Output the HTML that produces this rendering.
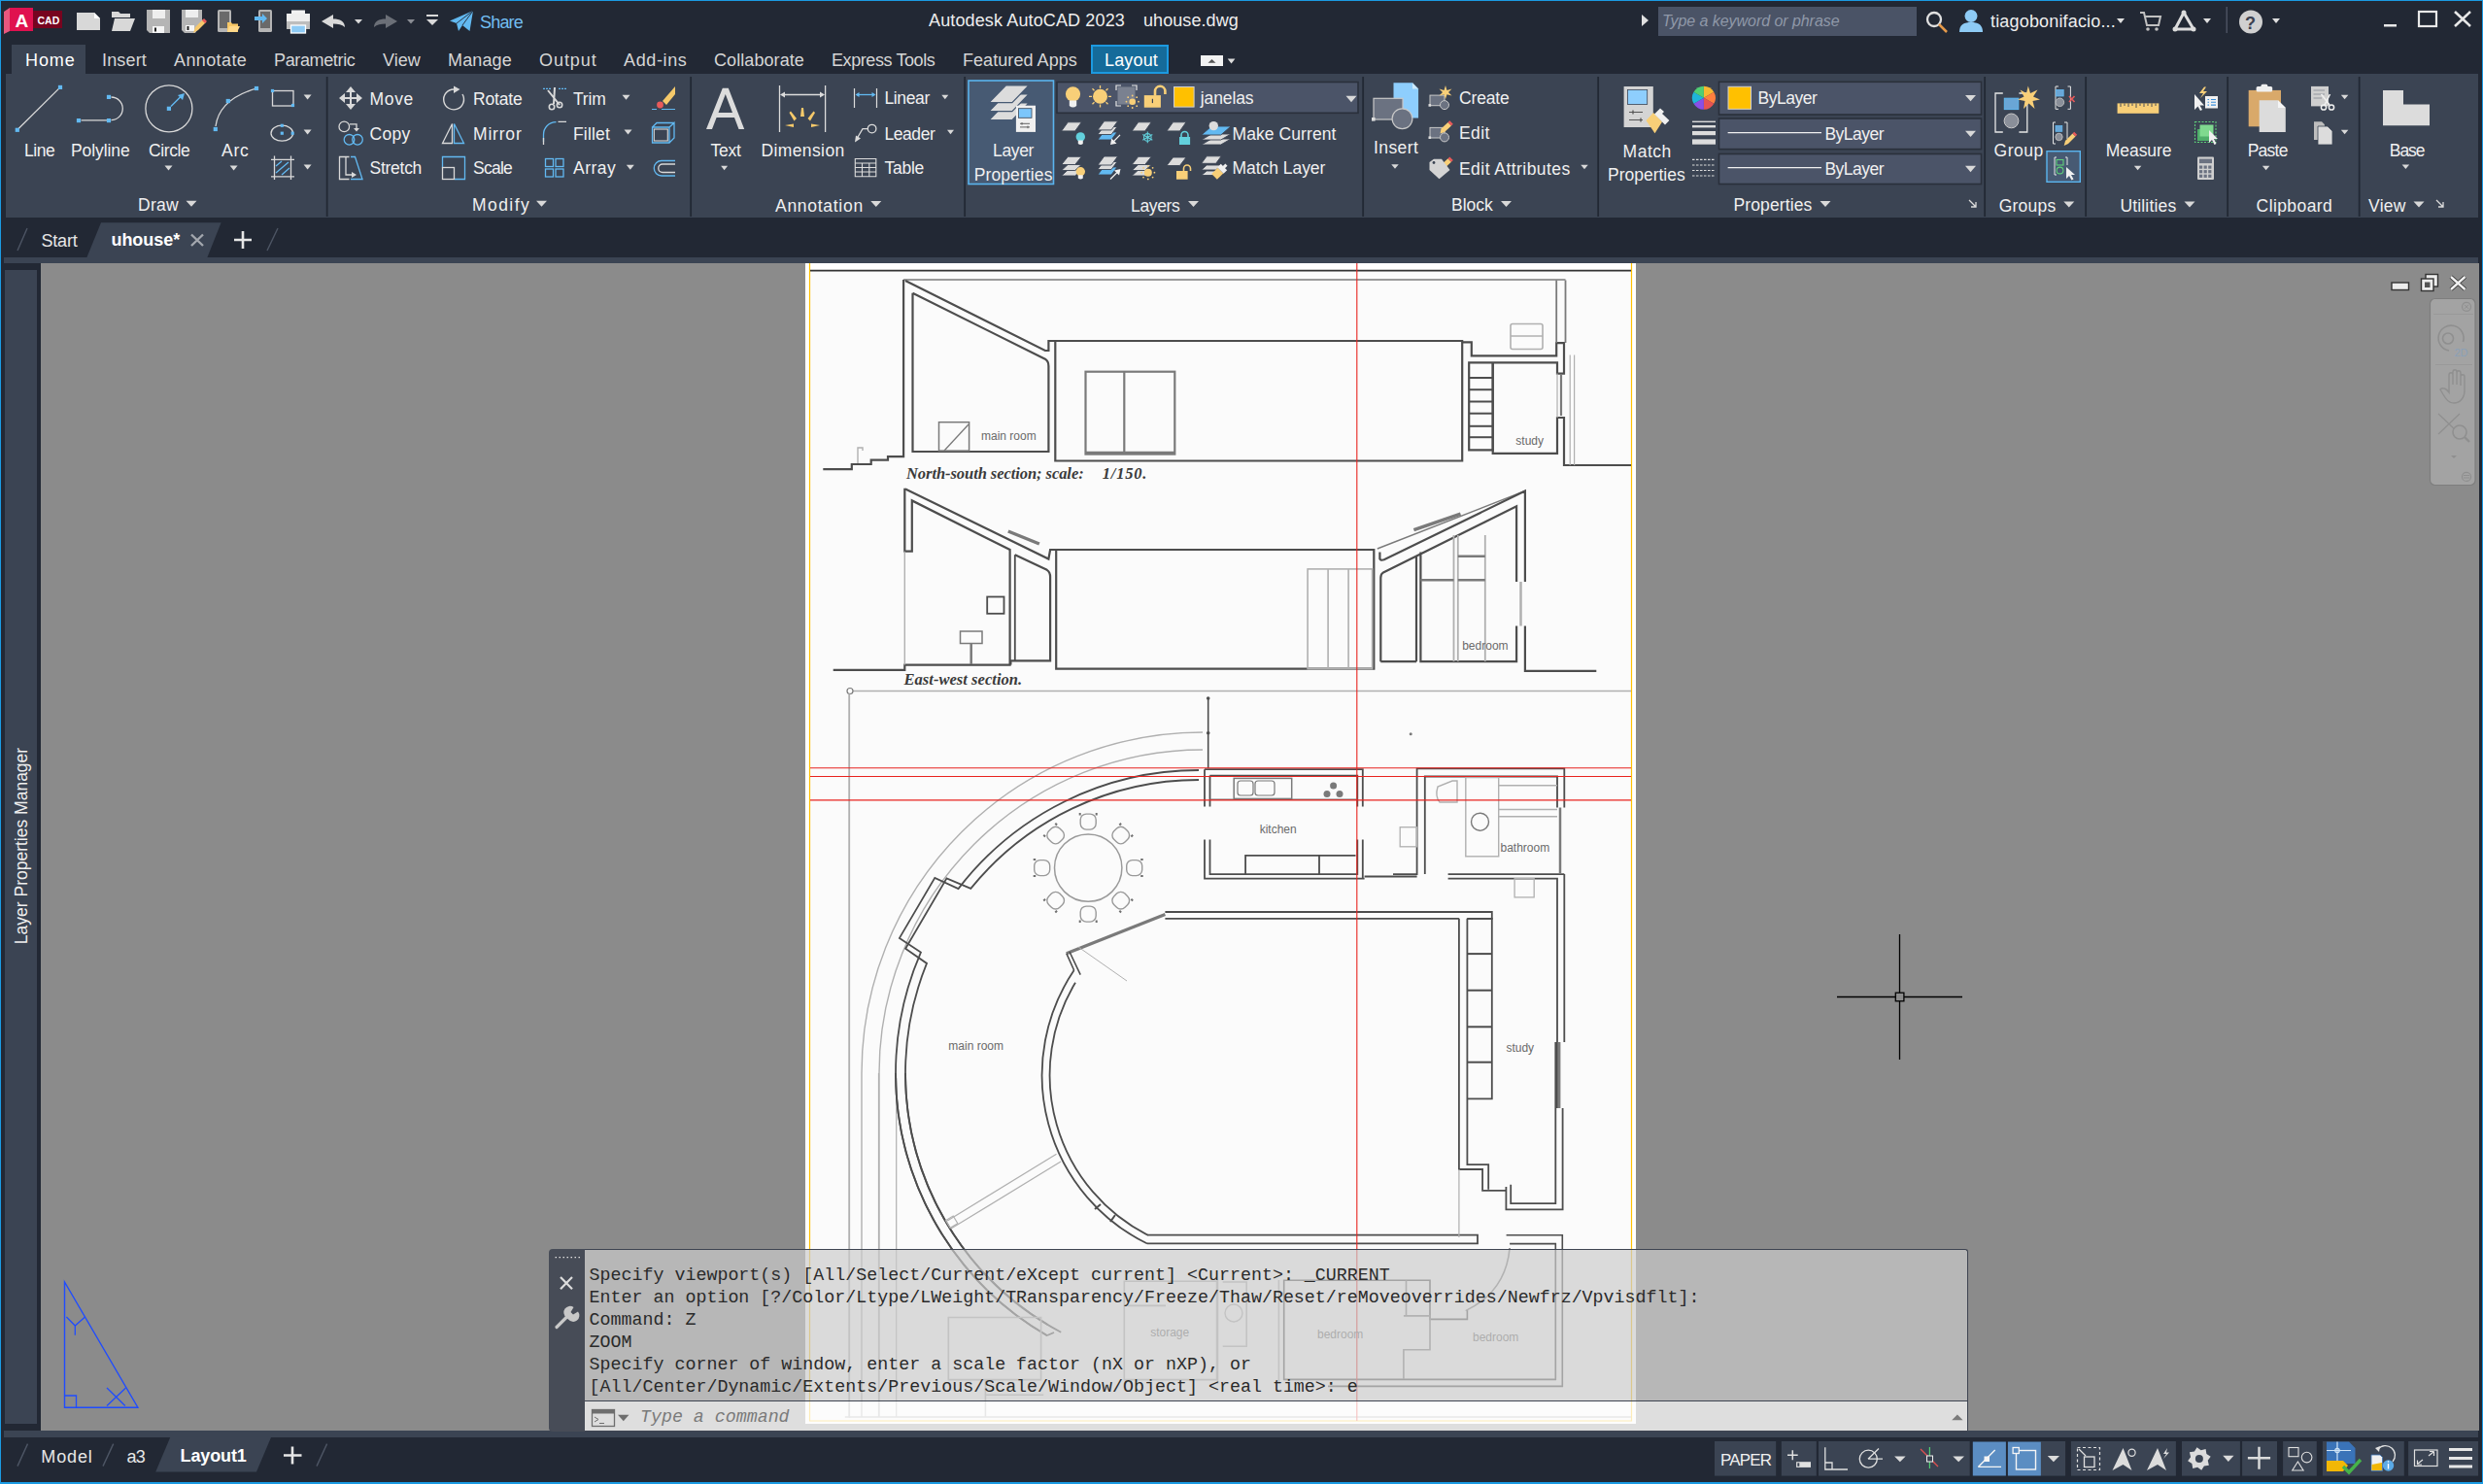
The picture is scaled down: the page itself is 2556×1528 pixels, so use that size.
<!DOCTYPE html>
<html><head><meta charset="utf-8"><title>AutoCAD</title>
<style>
html,body{margin:0;padding:0;width:2556px;height:1528px;overflow:hidden;background:#222834;}
body{position:relative;font-family:"Liberation Sans",sans-serif;}
body>div,body>svg{position:absolute;}
.t{white-space:nowrap;}
</style></head><body>
<div style="left:0px;top:0px;width:2556px;height:1528px;background:#222834;"></div>
<div style="left:6px;top:76px;width:2545px;height:148px;background:#3b4453;"></div>
<div style="left:12px;top:46px;width:76px;height:30px;background:#3b4453;"></div>
<div style="left:4px;top:265px;width:2547px;height:6px;background:#3b4453;"></div>
<div style="left:42px;top:271px;width:2510px;height:1202px;background:#8b8b8b;"></div>
<div style="left:5px;top:278px;width:33px;height:1188px;background:#3b4453;"></div>
<div style="left:4px;top:1473px;width:2547px;height:7px;background:#3b4453;"></div>
<div style="left:0px;top:0px;width:2556px;height:1px;background:#1b9be3;"></div>
<div style="left:0px;top:0px;width:1px;height:1528px;background:#1b9be3;"></div>
<div style="left:2555px;top:0px;width:1px;height:1528px;background:#1b9be3;"></div>
<div style="left:0px;top:1526px;width:2556px;height:2px;background:#1b9be3;"></div>
<svg style="left:0;top:0" width="2556" height="45" viewBox="0 0 2556 45"><polygon points="4,12 10,8 10,32 4,35" fill="#e8577e"/><rect x="10" y="8" width="24" height="24" fill="#e0114f"/><rect x="34" y="11" width="30" height="18" fill="#77041f"/><text x="15.5" y="27.5" font-family="Liberation Sans" font-weight="bold" font-size="19" fill="#ffffff">A</text><text x="38.5" y="25" font-family="Liberation Sans" font-weight="bold" font-size="10.5" fill="#ffffff">CAD</text><path d="M79,13 H97 L103,19 V31 H79 Z" fill="#d8d8d8"/><path d="M97,13 L103,19 H97 Z" fill="#ffffff"/><path d="M115,12 H122 L124,14 H134 V18 H115 Z" fill="#d8d8d8"/><path d="M118,19 H139 L134,32 H115 Z" fill="#d8d8d8"/><path d="M115,18 V32" stroke="#222834" stroke-width="0"/><path d="M151,10 H175 V34 H154 L151,31 Z" fill="#b5b5b5"/><rect x="157" y="10" width="13" height="9" fill="#eeeeee"/><rect x="157" y="27" width="12" height="7" fill="#f5f5f5"/><rect x="159" y="28.5" width="2" height="4" fill="#222"/><path d="M187,10 H208 V24 L201,34 H190 L187,31 Z" fill="#b5b5b5"/><rect x="191" y="10" width="13" height="8" fill="#eeeeee"/><rect x="191" y="26" width="9" height="6" fill="#f5f5f5"/><rect x="192.5" y="27" width="2" height="4" fill="#222"/><path d="M199,34 L201,28 L209,20 L212,23 L204,31 Z" fill="#f5c76b"/><path d="M208,21 L210,19 L213,22 L211,24 Z" fill="#e85a5a"/><rect x="224" y="10" width="14" height="23" rx="1.5" fill="#b5b5b5"/><rect x="226" y="12" width="10" height="17" fill="#6a6a6a"/><path d="M234,23 H238 L239,24.5 H245 V33 H234 Z" fill="#f7c766"/><path d="M236,27 H247 L244,33 H234 Z" fill="#ffd98a"/><rect x="266" y="10" width="14" height="23" rx="1.5" fill="#b5b5b5"/><rect x="268" y="12" width="10" height="17" fill="#6a6a6a"/><path d="M262,17 H270 V14 L275,19 L270,24 V21 H262 Z" fill="#62b9f1"/><rect x="299.5" y="10" width="15" height="8" fill="#f2f2f2" stroke="#222834" stroke-width="1"/><rect x="295" y="14" width="24" height="9" fill="#eeeeee"/><rect x="295" y="22" width="24" height="8" fill="#bdbdbd"/><rect x="299.5" y="26" width="15" height="8" fill="#8ecbf5" stroke="#ffffff" stroke-width="1.3"/><path d="M331,22 L343,15 V19.5 C350,19.5 355,22 355,28 C352,25 348,24.5 343,24.5 V29 Z" fill="#d9d9d9"/><path d="M365,20 H373 L369,24.5 Z" fill="#d9d9d9"/><path d="M409,22 L397,15 V19.5 C390,19.5 385,22 385,28 C388,25 392,24.5 397,24.5 V29 Z" fill="#6b6f77"/><path d="M419,20 H427 L423,24.5 Z" fill="#8a8d94"/><rect x="439" y="15" width="12" height="2" fill="#d9d9d9"/><path d="M439,20 H451 L445,26 Z" fill="#d9d9d9"/><path d="M487,11 L463,21.5 L470,24 L472,32 L476,26 L483.5,32 Z" fill="#62b9f1"/><path d="M487,11 L470,24 M487,11 L476,26" stroke="#222834" stroke-width="0.9" fill="none"/><path d="M1690,15 L1697,21 L1690,27 Z" fill="#e0e0e0"/><circle cx="1991" cy="20" r="7" fill="none" stroke="#e0e0e0" stroke-width="2.3"/><path d="M1996,25 L2004,33" stroke="#e69a4a" stroke-width="2.5"/><circle cx="2029" cy="16.5" r="6.5" fill="#8ecbf5"/><path d="M2017,33 C2017,25 2022,23 2029,23 C2036,23 2041,25 2041,33 Z" fill="#8ecbf5"/><path d="M2179,19 H2187 L2183,24 Z" fill="#e0e0e0"/><path d="M2203,13 H2207 L2210,26 H2222 L2224,17 H2208" fill="none" stroke="#c0c0c0" stroke-width="2"/><circle cx="2211" cy="30" r="1.8" fill="#c0c0c0"/><circle cx="2220" cy="30" r="1.8" fill="#c0c0c0"/><path d="M2248,13 L2239,30 H2258 Z" fill="none" stroke="#dcdcdc" stroke-width="3" stroke-linejoin="round"/><circle cx="2248" cy="13" r="2.5" fill="#dcdcdc"/><circle cx="2239" cy="30" r="2.5" fill="#dcdcdc"/><circle cx="2258" cy="30" r="2.5" fill="#dcdcdc"/><path d="M2268,19 H2276 L2272,24 Z" fill="#e0e0e0"/><rect x="2291.5" y="7" width="1.5" height="27" fill="#4a5060"/><circle cx="2317" cy="22.5" r="12" fill="#d0d0d0"/><text x="2311" y="29.5" font-family="Liberation Sans" font-size="18" font-weight="bold" fill="#3b4150">?</text><path d="M2339,19 H2347 L2343,24 Z" fill="#e0e0e0"/><rect x="2454" y="25" width="13" height="2.5" fill="#e8e8e8"/><rect x="2490" y="12" width="18" height="15" fill="none" stroke="#e8e8e8" stroke-width="2.2"/><path d="M2527,12 L2543,27 M2543,12 L2527,27" stroke="#e8e8e8" stroke-width="2.6"/></svg>
<svg style="left:0;top:76" width="2556" height="150" viewBox="0 76 2556 150"><rect x="335.75" y="79" width="1.8" height="144" fill="#222834"/><rect x="710.25" y="79" width="1.8" height="144" fill="#222834"/><rect x="992.25" y="79" width="1.8" height="144" fill="#222834"/><rect x="1402.25" y="79" width="1.8" height="144" fill="#222834"/><rect x="1644.25" y="79" width="1.8" height="144" fill="#222834"/><rect x="2042.25" y="79" width="1.8" height="144" fill="#222834"/><rect x="2146.25" y="79" width="1.8" height="144" fill="#222834"/><rect x="2292.25" y="79" width="1.8" height="144" fill="#222834"/><rect x="2427.75" y="79" width="1.8" height="144" fill="#222834"/><path d="M17.8,133.8 L62,89.9" stroke="#d9d9d9" stroke-width="1.3"/><rect x="15.700000000000001" y="131.70000000000002" width="4.2" height="4.2" fill="#62b9f1"/><rect x="59.9" y="87.80000000000001" width="4.2" height="4.2" fill="#62b9f1"/><path d="M83.5,123.8 H110 M114.5,100 A11.8,11.8 0 0 1 114.5,123.6" stroke="#d9d9d9" stroke-width="1.3" fill="none"/><rect x="78.9" y="122.0" width="4.2" height="4.2" fill="#62b9f1"/><rect x="109.9" y="122.0" width="4.2" height="4.2" fill="#62b9f1"/><rect x="109.9" y="97.80000000000001" width="4.2" height="4.2" fill="#62b9f1"/><circle cx="173.9" cy="111.8" r="24" stroke="#d9d9d9" stroke-width="1.3" fill="none"/><path d="M176,109.6 L186,99.6" stroke="#62b9f1" stroke-width="1.4"/><path d="M190,96 L183,98 L188,103 Z" fill="#62b9f1"/><rect x="171.8" y="109.7" width="4.2" height="4.2" fill="#62b9f1"/><path d="M222,130 C224,115 233,100 264,91" stroke="#d9d9d9" stroke-width="1.3" fill="none"/><rect x="219.70000000000002" y="130.9" width="4.2" height="4.2" fill="#62b9f1"/><rect x="232.70000000000002" y="101.9" width="4.2" height="4.2" fill="#62b9f1"/><rect x="261.9" y="88.9" width="4.2" height="4.2" fill="#62b9f1"/><path d="M169.5,170.4 H177.5 L173.5,175.4 Z" fill="#d9d9d9"/><path d="M236.6,170.4 H244.6 L240.6,175.4 Z" fill="#d9d9d9"/><path d="M191.5,206.7 H202.5 L197,212.7 Z" fill="#d9d9d9"/><rect x="280.5" y="93.5" width="21.5" height="15.5" stroke="#d9d9d9" stroke-width="1.3" fill="none"/><rect x="278.9" y="91.9" width="3.2" height="3.2" fill="#62b9f1"/><rect x="299.9" y="106.9" width="3.2" height="3.2" fill="#62b9f1"/><ellipse cx="290.3" cy="137.2" rx="11.3" ry="8" stroke="#d9d9d9" stroke-width="1.3" fill="none"/><rect x="288.7" y="127.70000000000002" width="3.2" height="3.2" fill="#62b9f1"/><rect x="288.7" y="135.6" width="3.2" height="3.2" fill="#62b9f1"/><rect x="299.59999999999997" y="135.6" width="3.2" height="3.2" fill="#62b9f1"/><path d="M279,164.3 H303 M279,181.8 H303 M282.5,160.5 V185 M299.5,160.5 V185" stroke="#d9d9d9" stroke-width="1.3"/><path d="M284,171 L290,166 M284,178 L297,167 M290,180 L298,173" stroke="#62b9f1" stroke-width="1.3"/><path d="M312.6,97.4 H320.6 L316.6,102.4 Z" fill="#d9d9d9"/><path d="M312.6,133.6 H320.6 L316.6,138.6 Z" fill="#d9d9d9"/><path d="M312.6,169.6 H320.6 L316.6,174.6 Z" fill="#d9d9d9"/><path d="M361,91 V111 M351,101 H371" stroke="#d9d9d9" stroke-width="2"/><path d="M361,89 L356,95 H366 Z M361,113 L356,107 H366 Z M349,101 L355,96 V106 Z M373,101 L367,96 V106 Z" fill="#d9d9d9"/><path d="M467,92 A10.4,10.4 0 1 0 476,97" stroke="#d9d9d9" stroke-width="1.4" fill="none"/><path d="M467,88.5 L473.5,92 L467,96 Z" fill="#d9d9d9"/><path d="M559,91.3 H567 M575,91.3 H583" stroke="#62b9f1" stroke-width="1.2" stroke-dasharray="2,1"/><path d="M564,93 L576,108 M571,90 L570,107" stroke="#d9d9d9" stroke-width="2"/><circle cx="568" cy="110" r="2.7" stroke="#d9d9d9" stroke-width="1.6" fill="none"/><circle cx="576" cy="108" r="2.7" stroke="#d9d9d9" stroke-width="1.6" fill="none"/><path d="M682,104 L695,89 V97 L686,108 Z" fill="#f5c96a"/><circle cx="679.5" cy="108" r="3.4" fill="#e85a5a"/><path d="M671,112.5 H676 M681,112.5 H695" stroke="#62b9f1" stroke-width="1.2"/><circle cx="354.3" cy="130.4" r="5.3" stroke="#d9d9d9" stroke-width="1.3" fill="none"/><path d="M360,127.8 H367 V133" stroke="#d9d9d9" stroke-width="1.3" fill="none"/><path d="M364,132 H370 L367,135.5 Z" fill="#d9d9d9"/><circle cx="359.5" cy="143.8" r="5.3" stroke="#62b9f1" stroke-width="1.3" fill="none"/><circle cx="368" cy="143.8" r="5.3" stroke="#62b9f1" stroke-width="1.3" fill="none"/><path d="M465.5,127.5 V147.5 H455.5 Z" stroke="#d9d9d9" stroke-width="1.3" fill="none" stroke-linejoin="miter"/><path d="M467.5,127.5 V147.5 H477.5 Z" stroke="#62b9f1" stroke-width="1.3" fill="none"/><path d="M559.5,146 V139 A13,13 0 0 1 572.5,125.6" stroke="#62b9f1" stroke-width="1.3" fill="none"/><path d="M574.5,125.3 H583 M559.5,142 V149" stroke="#d9d9d9" stroke-width="1.3"/><path d="M671.5,131 H689 V147 H671.5 Z M689,147 L694,142 V126.5 L689,131 M671.5,131 L676,126.5 H694" stroke="#62b9f1" stroke-width="1.3" fill="none"/><rect x="673.3" y="133" width="14" height="12" stroke="#d9d9d9" stroke-width="1.1" fill="none"/><path d="M359.5,161.5 H349.5 V184.5 H359.5" stroke="#d9d9d9" stroke-width="1.3" fill="none"/><path d="M356,161.5 V180 H363" stroke="#d9d9d9" stroke-width="1.3" fill="none"/><path d="M362,177 L367,180 L362,183 Z" fill="#d9d9d9"/><path d="M361,161.5 H365.5 L373,184.5 H361" stroke="#62b9f1" stroke-width="1.3" fill="none"/><path d="M455.5,172.5 V161.5 H478.5 V184.5 H468" stroke="#62b9f1" stroke-width="1.3" fill="none"/><rect x="455.5" y="172.5" width="12" height="12" stroke="#d9d9d9" stroke-width="1.3" fill="none"/><rect x="561.5" y="163.5" width="8" height="8" stroke="#62b9f1" stroke-width="1.3" fill="none"/><rect x="572" y="163.5" width="8" height="8" stroke="#62b9f1" stroke-width="1.3" fill="none"/><rect x="561.5" y="174" width="8" height="8" stroke="#62b9f1" stroke-width="1.3" fill="none"/><rect x="572" y="174" width="8" height="8" stroke="#62b9f1" stroke-width="1.3" fill="none"/><path d="M695,165.5 H681 A7.7,7.7 0 0 0 681,181 H695" stroke="#62b9f1" stroke-width="1.3" fill="none"/><path d="M695,169 H682 A4,4 0 0 0 682,177.5 H695" stroke="#d9d9d9" stroke-width="1.3" fill="none"/><path d="M640.5,97.7 H648.5 L644.5,102.7 Z" fill="#d9d9d9"/><path d="M642.5,133.6 H650.5 L646.5,138.6 Z" fill="#d9d9d9"/><path d="M644.8,169.8 H652.8 L648.8,174.8 Z" fill="#d9d9d9"/><path d="M552.0,206.7 H563.0 L557.5,212.7 Z" fill="#d9d9d9"/></svg>
<svg style="left:0;top:76" width="2556" height="150" viewBox="0 76 2556 150"><path d="M727,133 L743.8,90.7 H749.8 L766.2,133 H760.5 L756,121 H737.6 L733,133 Z M739.5,116 H754 L746.8,97 Z" fill="#dcdcdc" fill-rule="evenodd"/><path d="M802.5,88 V136 M849.6,88 V136 M806,97.5 H846" stroke="#dcdcdc" stroke-width="1.3"/><path d="M803,97.5 L808,94.5 V100.5 Z M849,97.5 L844,94.5 V100.5 Z" fill="#dcdcdc"/><g fill="#f5c96a"><path d="M825,111 L827,111 L828,120 L824,120 Z"/><path d="M812.5,116 L814,114.5 L820,122 L817.5,124.5 Z"/><path d="M839,116 L837.5,114.5 L831.5,122 L834,124.5 Z"/><path d="M808,129 L817,127.5 V131 Z"/><path d="M844,129 L835,127.5 V131 Z"/></g><path d="M879.5,91 V111 M902.5,91 V111" stroke="#dcdcdc" stroke-width="1.2"/><path d="M882,97.5 H900" stroke="#62b9f1" stroke-width="1.3"/><path d="M880.5,97.5 L884.5,95 V100 Z M901.5,97.5 L897.5,95 V100 Z" fill="#62b9f1"/><circle cx="897.6" cy="132.6" r="4.3" stroke="#dcdcdc" stroke-width="1.3" fill="none"/><path d="M893.2,132.6 H888 L882.5,142" stroke="#dcdcdc" stroke-width="1.3" fill="none"/><path d="M880,146.5 L881,139.5 L886,142.5 Z" fill="#dcdcdc"/><path d="M880.3,163.5 H901.8 V181.8 H880.3 Z M880.3,168 H901.8 M880.3,172.5 H901.8 M880.3,177 H901.8 M887.5,168 V181.8 M894.8,168 V181.8" stroke="#dcdcdc" stroke-width="1.1" fill="none"/><path d="M742.1,170.75 H749.1 L745.6,175.25 Z" fill="#d9d9d9"/><path d="M969.3,97.85 H976.3 L972.8,102.35 Z" fill="#d9d9d9"/><path d="M975.0,133.75 H982.0 L978.5,138.25 Z" fill="#d9d9d9"/><path d="M896.3,206.9 H907.3 L901.8,212.9 Z" fill="#d9d9d9"/><rect x="997" y="83" width="87.5" height="106.5" fill="#475a73" stroke="#5ab4ee" stroke-width="1.6"/><path d="M1018.2,123.7 H1041.9 L1059,106 H1035.3 Z" fill="#dcdcdc" stroke="#475a73" stroke-width="1.2"/><path d="M1018.2,114.7 H1041.9 L1059,97 H1035.3 Z" fill="#dcdcdc" stroke="#475a73" stroke-width="1.2"/><path d="M1018.2,105.7 H1041.9 L1059,88 H1035.3 Z" fill="#dcdcdc" stroke="#475a73" stroke-width="1.2"/><rect x="1045.9" y="108.7" width="20.1" height="27.2" fill="#f0f0f0"/><rect x="1048.4" y="111.7" width="13.6" height="9.6" fill="#7cc6fb" stroke="#3b4453" stroke-width="0.8"/><path d="M1050,127.3 H1060 M1050,130.9 H1060" stroke="#555" stroke-width="0.9"/><path d="M1052,126 V128.6 M1058,129.6 V132.2" stroke="#555" stroke-width="0.9"/><rect x="1088" y="84.5" width="310" height="31.8" fill="#4b5468" stroke="#2a303b" stroke-width="1.6"/><circle cx="1104.5" cy="96.8" r="7.6" fill="#f8cf78"/><path d="M1100.8,103.5 H1108.2 V109 Q1104.5,112 1100.8,109 Z" fill="#f0f0f0"/><circle cx="1132.5" cy="99.3" r="7.5" fill="#f8cf78"/><g stroke="#f8cf78" stroke-width="1.3"><path d="M1132.5,88 V91 M1132.5,107.6 V110.6 M1121,99.3 H1124 M1141,99.3 H1144 M1124.5,91.3 L1126.5,93.3 M1140.5,91.3 L1138.5,93.3 M1124.5,107.3 L1126.5,105.3 M1140.5,107.3 L1138.5,105.3"/></g><rect x="1150.5" y="89.5" width="18" height="18" fill="#7a8190"/><path d="M1149,93 V88 H1154 M1165,88 H1170 V93 M1149,104 V109 H1154" stroke="#e6e6e6" stroke-width="1.2" fill="none"/><circle cx="1165.7" cy="104.7" r="3.3" fill="#f8cf78"/><g fill="#f8cf78"><circle cx="1165.7" cy="98.5" r="0.9"/><circle cx="1165.7" cy="111" r="0.9"/><circle cx="1159.5" cy="104.7" r="0.9"/><circle cx="1172" cy="104.7" r="0.9"/><circle cx="1161.2" cy="100.2" r="0.9"/><circle cx="1170.2" cy="100.2" r="0.9"/><circle cx="1161.2" cy="109.2" r="0.9"/><circle cx="1170.2" cy="109.2" r="0.9"/></g><rect x="1177.8" y="98.1" width="17.1" height="12.6" fill="#f8cf78"/><path d="M1189,98.5 V94 A5.2,5.2 0 0 1 1199.4,94 V97" stroke="#f8cf78" stroke-width="2.6" fill="none"/><rect x="1185.8" y="101.8" width="1.2" height="4.3" fill="#3b4453"/><rect x="1208.5" y="89.5" width="20.6" height="20.6" fill="#ffc000" stroke="#d0d0d0" stroke-width="1"/><path d="M1385.5,98.85 H1396.5 L1391,105.15 Z" fill="#d9d9d9"/><path d="M1092.7,134.9 H1106.7 L1113.3,125.8 H1099.3 Z" fill="#dcdcdc" stroke="#3b4453" stroke-width="0.9"/><circle cx="1112.3" cy="140.9" r="4.7" fill="#62d0dc"/><path d="M1109.8,144.5 H1114.8 V148 Q1112.3,150 1109.8,148 Z" fill="#f0f0f0"/><path d="M1130,144 H1144 L1150,136 H1136 Z" fill="#62b9f1" stroke="#3b4453" stroke-width="0.9"/><path d="M1130,138.5 H1144 L1150,130.5 H1136 Z" fill="#dcdcdc" stroke="#3b4453" stroke-width="0.9"/><path d="M1130,133.9 H1144 L1150.6,124.8 H1136.6 Z" fill="#dcdcdc" stroke="#3b4453" stroke-width="0.9"/><path d="M1153,138.9 L1146,146" stroke="#f0f0f0" stroke-width="1.3"/><path d="M1143,149 L1144.2,142.5 L1149.5,147.8 Z" fill="#f0f0f0"/><path d="M1165.2,134.9 H1178.7 L1185.2,125.8 H1171.7 Z" fill="#dcdcdc" stroke="#3b4453" stroke-width="0.9"/><g stroke="#62d0dc" stroke-width="1.1" fill="none"><circle cx="1181.3" cy="141.4" r="3.8"/><path d="M1181.3,135.6 V147.2 M1176.3,138.5 L1186.3,144.3 M1176.3,144.3 L1186.3,138.5"/></g><path d="M1201,134.9 H1214.5 L1221.0,125.8 H1207.5 Z" fill="#dcdcdc" stroke="#3b4453" stroke-width="0.9"/><rect x="1214" y="141" width="11.1" height="8" fill="#62d0dc"/><path d="M1216,141.5 V139 A3.5,3.5 0 0 1 1223,139 V141.5" stroke="#62d0dc" stroke-width="1.6" fill="none"/><path d="M1236.7,149 H1256.7 L1267.1000000000001,143 H1247.1000000000001 Z" fill="#dcdcdc" stroke="#3b4453" stroke-width="0.9"/><path d="M1236.7,144 H1256.7 L1267.1000000000001,138 H1247.1000000000001 Z" fill="#dcdcdc" stroke="#3b4453" stroke-width="0.9"/><path d="M1236.7,139 H1256.7 L1267.1000000000001,130 H1247.1000000000001 Z" fill="#62b9f1" stroke="#3b4453" stroke-width="0.9"/><circle cx="1249.3" cy="129.6" r="4.7" fill="#dcdcdc"/><path d="M1092.7,181 H1106.7 L1113.2,175 H1099.2 Z" fill="#dcdcdc" stroke="#3b4453" stroke-width="0.9"/><path d="M1092.7,175.5 H1106.7 L1113.2,169.5 H1099.2 Z" fill="#dcdcdc" stroke="#3b4453" stroke-width="0.9"/><path d="M1092.7,169.5 H1106.7 L1113.3,161.3 H1099.3 Z" fill="#dcdcdc" stroke="#3b4453" stroke-width="0.9"/><circle cx="1112.3" cy="176.7" r="4.7" fill="#f8cf78"/><path d="M1109.8,180.3 H1114.8 V183.5 Q1112.3,185.5 1109.8,183.5 Z" fill="#f0f0f0"/><path d="M1130,180 H1144 L1150,172 H1136 Z" fill="#62b9f1" stroke="#3b4453" stroke-width="0.9"/><path d="M1130,174.5 H1144 L1150,166.5 H1136 Z" fill="#dcdcdc" stroke="#3b4453" stroke-width="0.9"/><path d="M1130,170 H1144 L1150.6,161 H1136.6 Z" fill="#dcdcdc" stroke="#3b4453" stroke-width="0.9"/><path d="M1143,184.5 L1150,177.5" stroke="#f0f0f0" stroke-width="1.3"/><path d="M1153.5,174 L1152,180.5 L1147,175.5 Z" fill="#f0f0f0"/><path d="M1165.2,181 H1178.7 L1185.2,175 H1171.7 Z" fill="#dcdcdc" stroke="#3b4453" stroke-width="0.9"/><path d="M1165.2,175.5 H1178.7 L1185.2,169.5 H1171.7 Z" fill="#dcdcdc" stroke="#3b4453" stroke-width="0.9"/><path d="M1165.2,169.5 H1178.7 L1185.3,161.3 H1171.8 Z" fill="#dcdcdc" stroke="#3b4453" stroke-width="0.9"/><circle cx="1181.8" cy="177.7" r="4" fill="#f8cf78"/><g fill="#f8cf78"><circle cx="1181.8" cy="171" r="0.9"/><circle cx="1181.8" cy="184.4" r="0.9"/><circle cx="1175.2" cy="177.7" r="0.9"/><circle cx="1188.4" cy="177.7" r="0.9"/><circle cx="1177" cy="172.8" r="0.9"/><circle cx="1186.6" cy="172.8" r="0.9"/><circle cx="1177" cy="182.6" r="0.9"/><circle cx="1186.6" cy="182.6" r="0.9"/></g><path d="M1201,170.5 H1214.5 L1221.0,162 H1207.5 Z" fill="#dcdcdc" stroke="#3b4453" stroke-width="0.9"/><rect x="1211" y="176" width="11.6" height="8.7" fill="#f8cf78"/><path d="M1218.5,176.5 V173.5 A3.5,3.5 0 0 1 1225.5,173.5 V176" stroke="#f8cf78" stroke-width="1.6" fill="none"/><path d="M1236.7,180.5 H1251.7 L1257.2,176 H1242.2 Z" fill="#dcdcdc" stroke="#3b4453" stroke-width="0.9"/><path d="M1236.7,175 H1251.7 L1257.2,170 H1242.2 Z" fill="#dcdcdc" stroke="#3b4453" stroke-width="0.9"/><path d="M1236.7,168.3 H1251.7 L1257.2,160.8 H1242.2 Z" fill="#dcdcdc" stroke="#3b4453" stroke-width="0.9"/><g transform="rotate(45 1255 177)"><rect x="1251" y="175" width="8" height="9" fill="#f8cf78"/><rect x="1250.5" y="170" width="9" height="5" fill="#f0f0f0"/><rect x="1253.5" y="166.5" width="3" height="4" fill="#f0f0f0"/></g><path d="M1223.0,207.1 H1234.0 L1228.5,213.1 Z" fill="#d9d9d9"/><path d="M1434.5,85.3 H1454 L1460.1,91.4 V121.5 H1434.5 Z" fill="#8ecefd"/><path d="M1454,85.3 V91.4 H1460.1 Z" fill="#cde9fb"/><rect x="1414" y="101.3" width="30" height="21.7" fill="#6b7281" stroke="#c8c8c8" stroke-width="1.2"/><circle cx="1443.5" cy="122.3" r="10.4" fill="#6b7281" stroke="#c8c8c8" stroke-width="1.2"/><rect x="1412" y="121" width="3.6" height="3.6" fill="#dcdcdc"/><path d="M1432.25,169.15 H1439.75 L1436,173.65 Z" fill="#d9d9d9"/><rect x="1472" y="98.1" width="15" height="10.6" fill="#6b7281" stroke="#c8c8c8" stroke-width="1"/><circle cx="1487" cy="108.1" r="4.5" fill="#6b7281" stroke="#c8c8c8" stroke-width="1"/><rect x="1470.5" y="107.1" width="2.6" height="2.6" fill="#dcdcdc"/><rect x="1472" y="131.4" width="15" height="10.6" fill="#6b7281" stroke="#c8c8c8" stroke-width="1"/><circle cx="1487" cy="141.4" r="4.5" fill="#6b7281" stroke="#c8c8c8" stroke-width="1"/><rect x="1470.5" y="140.4" width="2.6" height="2.6" fill="#dcdcdc"/><path d="M1488,88 L1489.5,93 L1494.5,91.5 L1491,95 L1494.5,98.6 L1489.5,97.2 L1488,102 L1486.5,97.2 L1481.5,98.6 L1485,95 L1481.5,91.5 L1486.5,93 Z" fill="#f8cf78"/><path d="M1482.5,137.5 L1483.5,132.5 L1490.5,126 L1494,129.5 L1487,136 Z" fill="#f8cf78"/><path d="M1490.5,126 L1492.3,124.2 L1495.8,127.7 L1494,129.5 Z" fill="#e85a5a"/><path d="M1482.5,174.8 L1483.5,169.8 L1490.5,163.3 L1494,166.8 L1487,173.3 Z" fill="#f8cf78"/><path d="M1490.5,163.3 L1492.3,161.5 L1495.8,165.0 L1494,166.8 Z" fill="#e85a5a"/><path d="M1471.5,167 L1476,163.8 H1484 L1492.5,175 L1481.5,184.3 L1471.5,175 Z" fill="#d4d4d4"/><circle cx="1476" cy="167.5" r="1.4" fill="#3b4453"/><path d="M1627.25,169.85 H1634.75 L1631,174.35 Z" fill="#d9d9d9"/><path d="M1545.0,206.9 H1556.0 L1550.5,212.9 Z" fill="#d9d9d9"/><rect x="1671.6" y="89" width="30.2" height="42" fill="#d4d4d4"/><rect x="1675.4" y="92.4" width="20.3" height="15.1" fill="#8ecefd" stroke="#3b4453" stroke-width="0.8"/><path d="M1677,115.5 H1691 M1677,123.5 H1691" stroke="#555" stroke-width="1"/><path d="M1681,113.5 V117.5 M1689,121.5 V125.5" stroke="#555" stroke-width="1.3"/><path d="M1694.5,124 L1702,116 L1711,125.5 L1703.5,137.3 Z" fill="#f8cf78"/><path d="M1703,117.5 L1709,111.5 L1713,115 L1711,117 L1718.4,124 L1714,128.5 Z" fill="#f0f0f0"/><path d="M1753.9,100.8 L1753.90,88.80 A12,12 0 0 1 1764.29,94.80 Z" fill="#f7b731"/><path d="M1753.9,100.8 L1764.29,94.80 A12,12 0 0 1 1764.29,106.80 Z" fill="#ff7f3f"/><path d="M1753.9,100.8 L1764.29,106.80 A12,12 0 0 1 1753.90,112.80 Z" fill="#e55353"/><path d="M1753.9,100.8 L1753.90,112.80 A12,12 0 0 1 1743.51,106.80 Z" fill="#8a4fe6"/><path d="M1753.9,100.8 L1743.51,106.80 A12,12 0 0 1 1743.51,94.80 Z" fill="#1fb5d9"/><path d="M1753.9,100.8 L1743.51,94.80 A12,12 0 0 1 1753.90,88.80 Z" fill="#4fcf73"/><rect x="1742" y="124.6" width="24" height="1.4" fill="#dcdcdc"/><rect x="1742" y="129" width="24" height="2.4" fill="#dcdcdc"/><rect x="1742" y="135" width="24" height="4.2" fill="#dcdcdc"/><rect x="1742" y="143.4" width="24" height="5.3" fill="#dcdcdc"/><g stroke="#dcdcdc" stroke-width="1.2" stroke-dasharray="2.5,1.5"><path d="M1742,164.3 H1766 M1742,170 H1766 M1742,175.5 H1766 M1742,181 H1766"/></g><rect x="1769.5" y="84.3" width="270" height="33.7" fill="#4b5468" stroke="#2a303b" stroke-width="1.6"/><path d="M2023.0,98.0 H2034.0 L2028.5,104.30000000000001 Z" fill="#d9d9d9"/><rect x="1769.5" y="122" width="270" height="31.599999999999994" fill="#4b5468" stroke="#2a303b" stroke-width="1.6"/><path d="M2023.0,134.65 H2034.0 L2028.5,140.95000000000002 Z" fill="#d9d9d9"/><rect x="1769.5" y="158.5" width="270" height="31.0" fill="#4b5468" stroke="#2a303b" stroke-width="1.6"/><path d="M2023.0,170.85 H2034.0 L2028.5,177.15 Z" fill="#d9d9d9"/><rect x="1779" y="89.3" width="23.5" height="23" fill="#ffc000" stroke="#d0d0d0" stroke-width="1"/><path d="M1778.6,136.6 H1875 M1778.6,172.6 H1875" stroke="#f0f0f0" stroke-width="1.4"/><path d="M1873.5,206.9 H1884.5 L1879,212.9 Z" fill="#d9d9d9"/><path d="M2027,206 L2034,213 M2034,208 V213 H2029" stroke="#dcdcdc" stroke-width="1.3" fill="none"/><path d="M2061.8,96 H2054 V136 H2061.8 M2078.4,96 H2086.8 V136 H2078.4" stroke="#e6e6e6" stroke-width="1.3" fill="none"/><rect x="2063.3" y="101.2" width="14.5" height="11.4" fill="#6aa6d6" stroke="#62b9f1" stroke-width="1"/><circle cx="2070.5" cy="124.4" r="7.4" fill="#8a8f99" stroke="#c8c8c8" stroke-width="1"/><path d="M2087.8,88.5 L2090,96 L2097.5,92.5 L2093,99.5 L2100,102.5 L2092.5,104 L2094.5,112 L2088.5,106.5 L2083,112 L2084.5,104 L2077,102.5 L2083.5,99.5 L2079.5,92.5 L2086,96 Z" fill="#f8cf78"/><path d="M2119,89 H2116 V112.3 H2119 M2128.5,89 H2131.4 V112.3 H2128.5" stroke="#e6e6e6" stroke-width="1" fill="none"/><rect x="2116.5" y="92.4" width="7.7" height="6.6" fill="#6aa6d6" stroke="#62b9f1" stroke-width="0.8"/><circle cx="2120.4" cy="105.3" r="4.3" fill="#8a8f99" stroke="#c8c8c8" stroke-width="0.8"/><path d="M2130,99 L2135.5,105 M2135.5,99 L2130,105" stroke="#e85a5a" stroke-width="1.6"/><path d="M2116,126 H2113.5 V148 H2116 M2125,126 H2128 V143" stroke="#e6e6e6" stroke-width="1" fill="none"/><rect x="2116" y="129.5" width="6.8" height="5.8" fill="#6aa6d6" stroke="#62b9f1" stroke-width="0.8"/><circle cx="2119.5" cy="141" r="3.7" fill="#8a8f99" stroke="#c8c8c8" stroke-width="0.8"/><path d="M2124.7,150 L2126,145 L2133.5,137.5 L2136.5,140.5 L2129,148 Z" fill="#f8cf78"/><path d="M2133.5,137.5 L2135.2,135.8 L2138.2,138.8 L2136.5,140.5 Z" fill="#e85a5a"/><rect x="2107" y="155.7" width="34.3" height="31.6" fill="#475a73" stroke="#5ab4ee" stroke-width="1.4"/><path d="M2117,162 H2115 V180 H2117 M2126,162 H2128 V170" stroke="#e6e6e6" stroke-width="1" fill="none"/><rect x="2117" y="164.5" width="7" height="5.5" fill="none" stroke="#5fd07a" stroke-width="1.1"/><circle cx="2120.5" cy="175.5" r="3.4" fill="none" stroke="#5fd07a" stroke-width="1.1"/><path d="M2127,172 L2127,184 L2130,181 L2132.5,185.5 L2134.5,184.5 L2132,180 L2136,180 Z" fill="#f0f0f0"/><path d="M2124.3,207.5 H2135.3 L2129.8,213.5 Z" fill="#d9d9d9"/><rect x="2179.6" y="106.4" width="42.7" height="10.4" fill="#f8cf78"/><g stroke="#3b4453" stroke-width="0.9"><path d="M2183,106.4 V110 M2187,106.4 V109 M2191,106.4 V110 M2195,106.4 V109 M2199,106.4 V111 M2203,106.4 V109 M2207,106.4 V110 M2211,106.4 V109 M2215,106.4 V110 M2219,106.4 V109"/></g><path d="M2196.85,170.75 H2204.35 L2200.6,175.25 Z" fill="#d9d9d9"/><path d="M2259,97 V113 L2262.5,109.5 L2265,114 L2267,113 L2264.5,108.5 L2269,108.5 Z" fill="#f0f0f0"/><rect x="2270" y="99" width="13" height="12.5" fill="#f0f0f0"/><path d="M2272.5,102.5 H2274 M2276,102.5 H2281 M2272.5,105.3 H2274 M2276,105.3 H2281 M2272.5,108.1 H2274 M2276,108.1 H2281" stroke="#3a8fd9" stroke-width="1.1"/><path d="M2269,89.5 L2264,96 H2268 L2265,101 L2272,94 H2268 L2271,89.5 Z" fill="#f8cf78"/><rect x="2259.5" y="125.5" width="21.5" height="21" fill="none" stroke="#5fd07a" stroke-width="1.1" stroke-dasharray="2,1.5"/><rect x="2262" y="133" width="14" height="12" fill="#4fae6a"/><rect x="2264.5" y="128.5" width="14" height="12" fill="#7fd98f"/><path d="M2274,134 L2274,147 L2277,144 L2279.5,149 L2281.5,148 L2279,143 L2283,143 Z" fill="#f0f0f0"/><rect x="2262" y="161.4" width="17" height="23.6" rx="1" fill="#cfcfcf"/><rect x="2264" y="163.6" width="13" height="4.5" fill="#6b7281"/><rect x="2264.0" y="170.5" width="3.2" height="3.2" fill="#6b7281"/><rect x="2264.0" y="175.1" width="3.2" height="3.2" fill="#6b7281"/><rect x="2264.0" y="179.7" width="3.2" height="3.2" fill="#6b7281"/><rect x="2268.6" y="170.5" width="3.2" height="3.2" fill="#6b7281"/><rect x="2268.6" y="175.1" width="3.2" height="3.2" fill="#6b7281"/><rect x="2268.6" y="179.7" width="3.2" height="3.2" fill="#6b7281"/><rect x="2273.2" y="170.5" width="3.2" height="3.2" fill="#6b7281"/><rect x="2273.2" y="175.1" width="3.2" height="3.2" fill="#6b7281"/><rect x="2273.2" y="179.7" width="3.2" height="3.2" fill="#6b7281"/><path d="M2248.5,207.5 H2259.5 L2254,213.5 Z" fill="#d9d9d9"/><rect x="2314.7" y="92.9" width="33.3" height="37.4" fill="#d9a96a"/><rect x="2322.6" y="89" width="16.6" height="5.5" rx="1.5" fill="#f0f0f0"/><rect x="2327.5" y="86.8" width="6.8" height="3" rx="1.5" fill="#f0f0f0"/><path d="M2325.7,103.3 H2345 L2352.8,111 V136.1 H2325.7 Z" fill="#dcdcdc"/><path d="M2345,103.3 V111 H2352.8 Z" fill="#f5f5f5"/><path d="M2328.85,170.75 H2336.35 L2332.6,175.25 Z" fill="#d9d9d9"/><rect x="2379" y="88.9" width="18" height="20.5" fill="#cfcfcf"/><path d="M2381.5,93 H2393 M2381.5,97 H2393 M2381.5,101 H2390" stroke="#8a8f99" stroke-width="0.9"/><path d="M2389.5,97 L2398,108 M2398.5,97 L2393,108" stroke="#f0f0f0" stroke-width="1.6"/><circle cx="2392" cy="110.5" r="2.6" fill="none" stroke="#f0f0f0" stroke-width="1.5"/><circle cx="2400" cy="110.5" r="2.6" fill="none" stroke="#f0f0f0" stroke-width="1.5"/><path d="M2409.85,97.85 H2417.35 L2413.6,102.35 Z" fill="#d9d9d9"/><path d="M2382,125.2 H2390 L2393,128.2 V144 H2382 Z" fill="#bdbdbd"/><path d="M2386,130 H2396 L2401,135 V149 H2386 Z" fill="#dcdcdc" stroke="#3b4453" stroke-width="0.8"/><path d="M2409.85,133.75 H2417.35 L2413.6,138.25 Z" fill="#d9d9d9"/><path d="M2453,92.9 H2474 V107.4 H2501 V129.2 H2453 Z" fill="#dcdcdc"/><path d="M2472.65,169.55 H2480.15 L2476.4,174.05 Z" fill="#d9d9d9"/><path d="M2484.5,207.5 H2495.5 L2490,213.5 Z" fill="#d9d9d9"/><path d="M2508,206 L2515,213 M2515,208 V213 H2510" stroke="#dcdcdc" stroke-width="1.3" fill="none"/></svg>
<div class="t" style="left:956px;top:11.9px;font-size:18px;line-height:18px;color:#eeeeee;letter-spacing:0.133px;">Autodesk AutoCAD 2023</div>
<div class="t" style="left:1177px;top:11.9px;font-size:18px;line-height:18px;color:#eeeeee;letter-spacing:0.08px;">uhouse.dwg</div>
<div class="t" style="left:494px;top:14.4px;font-size:18px;line-height:18px;color:#72bdf0;letter-spacing:-0.812px;">Share</div>
<div style="left:1707px;top:7px;width:266px;height:30px;background:#4a5366;"></div>
<div class="t" style="left:1711px;top:14.3px;font-size:16px;line-height:16px;color:#8f98a8;font-style:italic;letter-spacing:-0.052px;">Type a keyword or phrase</div>
<div class="t" style="left:2049px;top:13.4px;font-size:18px;line-height:18px;color:#eeeeee;letter-spacing:0.169px;">tiagobonifacio...</div>
<div class="t" style="left:26px;top:53.2px;font-size:18px;line-height:18px;color:#ffffff;letter-spacing:0.928px;">Home</div>
<div class="t" style="left:105px;top:53.2px;font-size:18px;line-height:18px;color:#d6d6d6;letter-spacing:0.154px;">Insert</div>
<div class="t" style="left:179px;top:53.2px;font-size:18px;line-height:18px;color:#d6d6d6;letter-spacing:0.391px;">Annotate</div>
<div class="t" style="left:282px;top:53.2px;font-size:18px;line-height:18px;color:#d6d6d6;letter-spacing:-0.359px;">Parametric</div>
<div class="t" style="left:394px;top:53.2px;font-size:18px;line-height:18px;color:#d6d6d6;letter-spacing:0.032px;">View</div>
<div class="t" style="left:461px;top:53.2px;font-size:18px;line-height:18px;color:#d6d6d6;letter-spacing:0.147px;">Manage</div>
<div class="t" style="left:555px;top:53.2px;font-size:18px;line-height:18px;color:#d6d6d6;letter-spacing:0.951px;">Output</div>
<div class="t" style="left:642px;top:53.2px;font-size:18px;line-height:18px;color:#d6d6d6;letter-spacing:0.628px;">Add-ins</div>
<div class="t" style="left:735px;top:53.2px;font-size:18px;line-height:18px;color:#d6d6d6;letter-spacing:0.074px;">Collaborate</div>
<div class="t" style="left:856px;top:53.2px;font-size:18px;line-height:18px;color:#d6d6d6;letter-spacing:-0.41px;">Express Tools</div>
<div class="t" style="left:991px;top:53.2px;font-size:18px;line-height:18px;color:#d6d6d6;letter-spacing:0.059px;">Featured Apps</div>
<div style="left:1123px;top:46px;width:80px;height:30px;background:#156b9a;box-sizing:border-box;border:2px solid #1c9ae0;"></div>
<div class="t" style="left:1137px;top:53.2px;font-size:18px;line-height:18px;color:#ffffff;letter-spacing:0.151px;">Layout</div>
<svg style="left:0;top:0" width="1300" height="80" viewBox="0 0 1300 80"><rect x="1236" y="57" width="23" height="11" fill="#f2f2f2"/><path d="M1243.5,64.8 H1251.5 L1247.5,61 Z" fill="#555"/><path d="M1263.7,60.5 H1271.4 L1267.55,65.5 Z" fill="#dcdcdc"/></svg>
<div class="t" style="left:25px;top:146.6px;font-size:17.5px;line-height:17.5px;color:#f0f0f0;letter-spacing:-0.448px;">Line</div>
<div class="t" style="left:73px;top:146.6px;font-size:17.5px;line-height:17.5px;color:#f0f0f0;letter-spacing:-0.078px;">Polyline</div>
<div class="t" style="left:153px;top:146.6px;font-size:17.5px;line-height:17.5px;color:#f0f0f0;letter-spacing:-0.397px;">Circle</div>
<div class="t" style="left:228px;top:146.6px;font-size:17.5px;line-height:17.5px;color:#f0f0f0;letter-spacing:0.75px;">Arc</div>
<div class="t" style="left:142px;top:203.2px;font-size:17.5px;line-height:17.5px;color:#f0f0f0;letter-spacing:0.302px;">Draw</div>
<div class="t" style="left:380.6px;top:93.6px;font-size:17.5px;line-height:17.5px;color:#f0f0f0;letter-spacing:0.651px;">Move</div>
<div class="t" style="left:380.6px;top:129.6px;font-size:17.5px;line-height:17.5px;color:#f0f0f0;letter-spacing:0.297px;">Copy</div>
<div class="t" style="left:380.6px;top:165.0px;font-size:17.5px;line-height:17.5px;color:#f0f0f0;letter-spacing:-0.284px;">Stretch</div>
<div class="t" style="left:487px;top:93.6px;font-size:17.5px;line-height:17.5px;color:#f0f0f0;letter-spacing:-0.163px;">Rotate</div>
<div class="t" style="left:487px;top:129.6px;font-size:17.5px;line-height:17.5px;color:#f0f0f0;letter-spacing:0.812px;">Mirror</div>
<div class="t" style="left:487px;top:165.0px;font-size:17.5px;line-height:17.5px;color:#f0f0f0;letter-spacing:-0.758px;">Scale</div>
<div class="t" style="left:590px;top:93.6px;font-size:17.5px;line-height:17.5px;color:#f0f0f0;letter-spacing:-0.198px;">Trim</div>
<div class="t" style="left:590px;top:129.6px;font-size:17.5px;line-height:17.5px;color:#f0f0f0;letter-spacing:0.159px;">Fillet</div>
<div class="t" style="left:590px;top:165.0px;font-size:17.5px;line-height:17.5px;color:#f0f0f0;letter-spacing:0.484px;">Array</div>
<div class="t" style="left:486px;top:203.2px;font-size:17.5px;line-height:17.5px;color:#f0f0f0;letter-spacing:1.441px;">Modify</div>
<div class="t" style="left:731.6px;top:147.1px;font-size:17.5px;line-height:17.5px;color:#f0f0f0;letter-spacing:-0.286px;">Text</div>
<div class="t" style="left:783.5px;top:147.1px;font-size:17.5px;line-height:17.5px;color:#f0f0f0;letter-spacing:0.383px;">Dimension</div>
<div class="t" style="left:910.5px;top:92.9px;font-size:17.5px;line-height:17.5px;color:#f0f0f0;letter-spacing:-0.381px;">Linear</div>
<div class="t" style="left:910.5px;top:129.6px;font-size:17.5px;line-height:17.5px;color:#f0f0f0;letter-spacing:-0.45px;">Leader</div>
<div class="t" style="left:910.5px;top:165.4px;font-size:17.5px;line-height:17.5px;color:#f0f0f0;letter-spacing:-0.273px;">Table</div>
<div class="t" style="left:798px;top:203.6px;font-size:17.5px;line-height:17.5px;color:#f0f0f0;letter-spacing:0.718px;">Annotation</div>
<div class="t" style="left:1022px;top:147.1px;font-size:17.5px;line-height:17.5px;color:#f0f0f0;letter-spacing:-0.333px;">Layer</div>
<div class="t" style="left:1002.7px;top:171.6px;font-size:17.5px;line-height:17.5px;color:#f0f0f0;letter-spacing:0.109px;">Properties</div>
<div class="t" style="left:1235.8px;top:92.9px;font-size:17.5px;line-height:17.5px;color:#f0f0f0;letter-spacing:-0.12px;">janelas</div>
<div class="t" style="left:1268.6px;top:129.6px;font-size:17.5px;line-height:17.5px;color:#f0f0f0;letter-spacing:0.067px;">Make Current</div>
<div class="t" style="left:1268.6px;top:165.4px;font-size:17.5px;line-height:17.5px;color:#f0f0f0;letter-spacing:-0.055px;">Match Layer</div>
<div class="t" style="left:1164px;top:203.6px;font-size:17.5px;line-height:17.5px;color:#f0f0f0;letter-spacing:-0.356px;">Layers</div>
<div class="t" style="left:1414px;top:143.9px;font-size:17.5px;line-height:17.5px;color:#f0f0f0;letter-spacing:0.394px;">Insert</div>
<div class="t" style="left:1502px;top:93.4px;font-size:17.5px;line-height:17.5px;color:#f0f0f0;letter-spacing:-0.156px;">Create</div>
<div class="t" style="left:1502px;top:129.1px;font-size:17.5px;line-height:17.5px;color:#f0f0f0;letter-spacing:0.431px;">Edit</div>
<div class="t" style="left:1502px;top:165.5px;font-size:17.5px;line-height:17.5px;color:#f0f0f0;letter-spacing:0.448px;">Edit Attributes</div>
<div class="t" style="left:1494px;top:203.3px;font-size:17.5px;line-height:17.5px;color:#f0f0f0;letter-spacing:-0.012px;">Block</div>
<div class="t" style="left:1670.6px;top:147.9px;font-size:17.5px;line-height:17.5px;color:#f0f0f0;letter-spacing:0.523px;">Match</div>
<div class="t" style="left:1655px;top:172.2px;font-size:17.5px;line-height:17.5px;color:#f0f0f0;letter-spacing:-0.002px;">Properties</div>
<div class="t" style="left:1809.6px;top:93.4px;font-size:17.5px;line-height:17.5px;color:#f0f0f0;letter-spacing:-0.509px;">ByLayer</div>
<div class="t" style="left:1878.4px;top:129.6px;font-size:17.5px;line-height:17.5px;color:#f0f0f0;letter-spacing:-0.509px;">ByLayer</div>
<div class="t" style="left:1878.4px;top:165.5px;font-size:17.5px;line-height:17.5px;color:#f0f0f0;letter-spacing:-0.509px;">ByLayer</div>
<div class="t" style="left:1784.5px;top:203.3px;font-size:17.5px;line-height:17.5px;color:#f0f0f0;letter-spacing:0.109px;">Properties</div>
<div class="t" style="left:2052.5px;top:146.8px;font-size:17.5px;line-height:17.5px;color:#f0f0f0;letter-spacing:0.527px;">Group</div>
<div class="t" style="left:2057.7px;top:204.0px;font-size:17.5px;line-height:17.5px;color:#f0f0f0;letter-spacing:0.212px;">Groups</div>
<div class="t" style="left:2167.8px;top:146.8px;font-size:17.5px;line-height:17.5px;color:#f0f0f0;letter-spacing:-0.057px;">Measure</div>
<div class="t" style="left:2182.4px;top:204.0px;font-size:17.5px;line-height:17.5px;color:#f0f0f0;letter-spacing:0.168px;">Utilities</div>
<div class="t" style="left:2313.7px;top:146.8px;font-size:17.5px;line-height:17.5px;color:#f0f0f0;letter-spacing:-0.75px;">Paste</div>
<div class="t" style="left:2322.6px;top:204.0px;font-size:17.5px;line-height:17.5px;color:#f0f0f0;letter-spacing:0.405px;">Clipboard</div>
<div class="t" style="left:2459.8px;top:146.8px;font-size:17.5px;line-height:17.5px;color:#f0f0f0;letter-spacing:-1.047px;">Base</div>
<div class="t" style="left:2438px;top:204.0px;font-size:17.5px;line-height:17.5px;color:#f0f0f0;letter-spacing:0.275px;">View</div>
<div style="left:829px;top:271px;width:855px;height:1195px;background:#ffffff;"></div>
<div style="left:834px;top:279px;width:845px;height:1184px;background:#fbfbfb;"></div>
<svg style="left:0;top:0" width="2556" height="1528" viewBox="0 0 2556 1528"><path d="M833.5,271 V1463 H1679.5 V271" fill="none" stroke="#ffc000" stroke-width="1.2"/><path d="M834,278.6 H1679" stroke="#333" stroke-width="1.8" fill="none" /><path d="M930.1,288 H1611.5" stroke="#7a7a7a" stroke-width="1.6" fill="none" /><path d="M930.1,288 V470.2 H914 V473.6 H896.7 V478 H876.8 V483.2 H847.3" stroke="#4d4d4d" stroke-width="2.2" fill="none" /><path d="M932,289 L1075.9,361 H1079.4 V351 H1505.2 V475.5 M1086.3,351 V474.5 H1505.2" stroke="#4d4d4d" stroke-width="2.2" fill="none" /><path d="M939.5,301.8 V465 H1079.4 V377 Q1079.4,372 1075.9,369.7 L939.5,301.8" stroke="#4d4d4d" stroke-width="2.2" fill="none" /><rect x="1117.5" y="382.7" width="91.8" height="84.9" fill="none" stroke="#7a7a7a" stroke-width="2.2"/><path d="M1157.3,382.7 V467.6" stroke="#7a7a7a" stroke-width="2.2" fill="none" /><path d="M1117.5,466 H1209.3" stroke="#7a7a7a" stroke-width="2.6" fill="none" /><path d="M883,477 V461 H888 V464" stroke="#b0b0b0" stroke-width="1.4" fill="none" /><rect x="966.5" y="434.7" width="31.1" height="29.4" fill="none" stroke="#7a7a7a" stroke-width="1.5"/><path d="M972,464 L997,437" stroke="#7a7a7a" stroke-width="1.3" fill="none" /><path d="M1506,352.3 H1514.8 V366.3 H1602.2 V353.2 H1610 V384.6 H1603 V373.3 H1512.2 V463.3 H1536.7 V373.3" stroke="#4d4d4d" stroke-width="2.2" fill="none" /><path d="M1536.7,373.3 V466.8 H1603 V430 H1610 V479 H1679" stroke="#4d4d4d" stroke-width="2.2" fill="none" /><path d="M1602.2,288.5 V353 M1611.5,288.5 V353" stroke="#7a7a7a" stroke-width="1.8" fill="none" /><path d="M1512.2,389 H1536.7" stroke="#4d4d4d" stroke-width="2.0" fill="none" /><path d="M1512.2,401.2 H1536.7" stroke="#4d4d4d" stroke-width="2.0" fill="none" /><path d="M1512.2,413.5 H1536.7" stroke="#4d4d4d" stroke-width="2.0" fill="none" /><path d="M1512.2,425.7 H1536.7" stroke="#4d4d4d" stroke-width="2.0" fill="none" /><path d="M1512.2,438.8 H1536.7" stroke="#4d4d4d" stroke-width="2.0" fill="none" /><path d="M1512.2,450.2 H1536.7" stroke="#4d4d4d" stroke-width="2.0" fill="none" /><path d="M1616.2,365.4 V479 M1620.6,365.4 V479 M1603,384.6 V430" stroke="#b0b0b0" stroke-width="1.2" fill="none" /><path d="M1607,386 V428" stroke="#7a7a7a" stroke-width="2.2" fill="none" /><rect x="1555" y="333.5" width="33" height="26" rx="2" fill="none" stroke="#b0b0b0" stroke-width="1.6"/><path d="M1555,346 H1588" stroke="#b0b0b0" stroke-width="1.6" fill="none" /><path d="M931.3,502.8 V567.7 H938.8 V515.4 L1039.6,566 V684.6 H931.3 V689.8 H857.7" stroke="#4d4d4d" stroke-width="2.2" fill="none" /><path d="M932,503.5 L1079.4,575.5 L1081.1,566 H1414.3 V688.7 H1087.2 V566" stroke="#4d4d4d" stroke-width="2.2" fill="none" /><path d="M931.3,567.7 V684.6" stroke="#b0b0b0" stroke-width="1.4" fill="none" /><path d="M1044.8,571.2 L1077.7,586.8 Q1081.1,589 1081.1,594 V680.3 H1040.4 V684.6" stroke="#4d4d4d" stroke-width="2.2" fill="none" /><path d="M1044.8,571.2 V680.3" stroke="#4d4d4d" stroke-width="1.8" fill="none" /><path d="M1037.8,547 L1069.9,560" stroke="#7a7a7a" stroke-width="3.5" fill="none" /><rect x="1016.2" y="614.5" width="17.3" height="17.3" fill="none" stroke="#4d4d4d" stroke-width="1.8"/><rect x="988.5" y="650" width="22.5" height="12.5" fill="none" stroke="#7a7a7a" stroke-width="1.5"/><path d="M999.7,662.5 V684" stroke="#7a7a7a" stroke-width="2.5" fill="none" /><path d="M1417.8,565 L1569.9,505.5" stroke="#7a7a7a" stroke-width="1.4" fill="none" /><path d="M1420.4,568.4 V575.4 Q1421,577.5 1424.8,576.3 L1569.9,505.5 V599 M1569.9,644.5 V690.8 H1643.3" stroke="#4d4d4d" stroke-width="2.2" fill="none" /><path d="M1421.3,681.2 V595 Q1421.3,591 1424,589.4 L1561.1,521.2 V599 M1561.1,644.5 V681.2 H1462.4 V568.4 M1458,681.2 H1421.3 M1458,572.8 V681.2" stroke="#4d4d4d" stroke-width="2.2" fill="none" /><path d="M1565.5,599 V644.5" stroke="#b0b0b0" stroke-width="2.5" fill="none" /><path d="M1455.4,545.7 L1503.5,529.1" stroke="#7a7a7a" stroke-width="3.5" fill="none" /><path d="M1496.5,551 V681" stroke="#b0b0b0" stroke-width="1.8" fill="none" /><path d="M1500.8,551 V681" stroke="#b0b0b0" stroke-width="1.8" fill="none" /><path d="M1528.8,551 V681" stroke="#b0b0b0" stroke-width="1.8" fill="none" /><path d="M1500.8,572.8 H1528.8 M1500.8,597.3 H1528.8 M1462.4,597.3 H1496.5" stroke="#7a7a7a" stroke-width="2.4" fill="none" /><rect x="1346.1" y="585.9" width="66.5" height="102.8" fill="none" stroke="#b0b0b0" stroke-width="1.6"/><path d="M1367.1,585.9 V688.7 M1388.1,585.9 V688.7" stroke="#b0b0b0" stroke-width="1.6" fill="none" /><path d="M878,711.5 H1679" stroke="#b0b0b0" stroke-width="1.6" fill="none" /><circle cx="875" cy="711.5" r="3" fill="none" stroke="#7a7a7a" stroke-width="1.2"/><path d="M874.5,714.5 V1460" stroke="#b0b0b0" stroke-width="1.2" fill="none" /></svg>
<div class="t" style="left:933px;top:480.1px;font-size:16.5px;line-height:16.5px;color:#3a3a3a;font-weight:bold;font-family:'Liberation Serif',monospace;font-style:italic;letter-spacing:-0.062px;">North-south section; scale:</div>
<div class="t" style="left:1134.8px;top:480.1px;font-size:16.5px;line-height:16.5px;color:#3a3a3a;font-weight:bold;font-family:'Liberation Serif',monospace;font-style:italic;letter-spacing:0.786px;">1/150.</div>
<div class="t" style="left:930.5px;top:691.6px;font-size:16.5px;line-height:16.5px;color:#3a3a3a;font-weight:bold;font-family:'Liberation Serif',monospace;font-style:italic;letter-spacing:0.037px;">East-west section.</div>
<div class="tc" style="position:absolute;left:1010px;top:442.9px;font-size:12px;line-height:13px;color:#6a6a6a;white-space:nowrap;">main room</div>
<div class="tc" style="position:absolute;left:1560.3px;top:448.0px;font-size:12px;line-height:13px;color:#6a6a6a;white-space:nowrap;">study</div>
<div class="tc" style="position:absolute;left:1505.2px;top:658.9px;font-size:12px;line-height:13px;color:#6a6a6a;white-space:nowrap;">bedroom</div>
<svg style="left:0;top:0" width="2556" height="1528" viewBox="0 0 2556 1528"><path d="M873.9,714.5 V1459 M904.5,1105 V1459 M922.7,1110 V1459" stroke="#b0b0b0" stroke-width="1.2" fill="none" /><path d="M1238.0,754.0 A351,351 0 0 0 887.0,1105.0 V1459" stroke="#b0b0b0" stroke-width="1.4" fill="none" /><path d="M1238.0,772.0 A333,333 0 0 0 905.0,1105.0 V1459" stroke="#b0b0b0" stroke-width="1.4" fill="none" /><path d="M869.8,1459 H1679" stroke="#b0b0b0" stroke-width="1.4" fill="none" /><path d="M1234.0,793.0 A312,312 0 0 0 986.5,915.1 L962.3,903.9 L925.9,965.9 L947.9,980.6 A312,312 0 0 0 1078.0,1375.2" stroke="#4d4d4d" stroke-width="1.8" fill="none" /><path d="M1234.0,803.0 A302,302 0 0 0 999.3,914.9 L974.5,904.4 L932.1,976.8 L954.0,991.9 A302,302 0 0 0 1078.5,1363.9" stroke="#4d4d4d" stroke-width="1.8" fill="none" /><path d="M1078.0,1375.2 A312,312 0 0 1 922.0,1105.0" stroke="#4d4d4d" stroke-width="1.8" fill="none" /><path d="M1092.2,1371.7 A302,302 0 0 1 932.0,1105.0" stroke="#4d4d4d" stroke-width="1.8" fill="none" /><path d="M1078,1375 L1085,1372" stroke="#4d4d4d" stroke-width="1.8" fill="none" /><path d="M975.2,1257 L1087.5,1188.3 M979,1265 L1092,1196" stroke="#b0b0b0" stroke-width="1.3" fill="none" /><rect x="975" y="1254" width="9" height="9" fill="none" stroke="#b0b0b0" stroke-width="1.2" transform="rotate(-31 979 1258)"/><path d="M1243.7,718 V791" stroke="#4d4d4d" stroke-width="1.6" fill="none" /><circle cx="1243.7" cy="719" r="1.8" fill="#4d4d4d"/><circle cx="1243.7" cy="754.7" r="1.8" fill="#4d4d4d"/><circle cx="1452.2" cy="755.7" r="1.5" fill="#7a7a7a"/><path d="M1199.4,939 H1535.8 V945.8 H1510.4" stroke="#4d4d4d" stroke-width="1.8" fill="none" /><path d="M1199.4,945.8 H1501.9" stroke="#4d4d4d" stroke-width="1.8" fill="none" /><path d="M1105.6,999.1 A193,193 0 0 0 1181.0,1280.5" stroke="#4d4d4d" stroke-width="1.8" fill="none" /><path d="M1107.0,1011.7 A185,185 0 0 0 1181.6,1271.8" stroke="#4d4d4d" stroke-width="1.8" fill="none" /><path d="M1181,1280.3 H1521 V1271.6 H1181" stroke="#4d4d4d" stroke-width="1.8" fill="none" /><path d="M1097.8,981.7 L1199.4,941.5" stroke="#7a7a7a" stroke-width="3.2" fill="none" /><path d="M1097.8,981.7 L1105.6,999 M1101,980 L1112.2,1003.6" stroke="#4d4d4d" stroke-width="1.6" fill="none" /><path d="M1127,1245 L1133,1240 M1143,1258 L1148,1251" stroke="#4d4d4d" stroke-width="2" fill="none" /><path d="M1110,975 L1160,1010" stroke="#b0b0b0" stroke-width="1" fill="none" /><circle cx="1120.2" cy="893.6" r="34.7" fill="none" stroke="#9a9a9a" stroke-width="1.5"/><g transform="translate(1120.2,846.6) rotate(0)"><rect x="-8" y="-8.5" width="16" height="16" rx="6" fill="none" stroke="#9a9a9a" stroke-width="1.4"/><path d="M-8.5,-7 V-9.5 M8.5,-7 V-9.5" stroke="#707070" stroke-width="2"/></g><g transform="translate(1153.4,860.4) rotate(45)"><rect x="-8" y="-8.5" width="16" height="16" rx="6" fill="none" stroke="#9a9a9a" stroke-width="1.4"/><path d="M-8.5,-7 V-9.5 M8.5,-7 V-9.5" stroke="#707070" stroke-width="2"/></g><g transform="translate(1167.2,893.6) rotate(90)"><rect x="-8" y="-8.5" width="16" height="16" rx="6" fill="none" stroke="#9a9a9a" stroke-width="1.4"/><path d="M-8.5,-7 V-9.5 M8.5,-7 V-9.5" stroke="#707070" stroke-width="2"/></g><g transform="translate(1153.4,926.8) rotate(135)"><rect x="-8" y="-8.5" width="16" height="16" rx="6" fill="none" stroke="#9a9a9a" stroke-width="1.4"/><path d="M-8.5,-7 V-9.5 M8.5,-7 V-9.5" stroke="#707070" stroke-width="2"/></g><g transform="translate(1120.2,940.6) rotate(180)"><rect x="-8" y="-8.5" width="16" height="16" rx="6" fill="none" stroke="#9a9a9a" stroke-width="1.4"/><path d="M-8.5,-7 V-9.5 M8.5,-7 V-9.5" stroke="#707070" stroke-width="2"/></g><g transform="translate(1087.0,926.8) rotate(225)"><rect x="-8" y="-8.5" width="16" height="16" rx="6" fill="none" stroke="#9a9a9a" stroke-width="1.4"/><path d="M-8.5,-7 V-9.5 M8.5,-7 V-9.5" stroke="#707070" stroke-width="2"/></g><g transform="translate(1073.2,893.6) rotate(270)"><rect x="-8" y="-8.5" width="16" height="16" rx="6" fill="none" stroke="#9a9a9a" stroke-width="1.4"/><path d="M-8.5,-7 V-9.5 M8.5,-7 V-9.5" stroke="#707070" stroke-width="2"/></g><g transform="translate(1087.0,860.4) rotate(315)"><rect x="-8" y="-8.5" width="16" height="16" rx="6" fill="none" stroke="#9a9a9a" stroke-width="1.4"/><path d="M-8.5,-7 V-9.5 M8.5,-7 V-9.5" stroke="#707070" stroke-width="2"/></g><path d="M1240,792.2 H1402.8 V830.6 M1245.5,798.6 H1397.3 V830.6 M1240,792.2 V830.6 M1245.5,798.6 V830.6" stroke="#4d4d4d" stroke-width="1.8" fill="none" /><path d="M1240,864.5 V904.7 H1404.6 M1245.5,864.5 V900.1 H1397.3 V864.5 M1402.8,864.5 V904.7" stroke="#4d4d4d" stroke-width="1.8" fill="none" /><path d="M1245.5,823.3 H1397.3" stroke="#7a7a7a" stroke-width="1.6" fill="none" /><rect x="1270.2" y="801.4" width="59.5" height="21" fill="none" stroke="#7a7a7a" stroke-width="1.5"/><rect x="1274" y="804" width="16" height="15" rx="3" fill="none" stroke="#7a7a7a" stroke-width="1.2"/><rect x="1292" y="804" width="20" height="15" rx="3" fill="none" stroke="#7a7a7a" stroke-width="1.2"/><g fill="#7a7a7a"><circle cx="1372.6" cy="809" r="3.5"/><circle cx="1366" cy="817.5" r="3.5"/><circle cx="1379" cy="817.5" r="3.5"/></g><path d="M1282.1,900 V880.9 H1395.5 M1358,880.9 V900" stroke="#4d4d4d" stroke-width="1.8" fill="none" /><path d="M1404.6,902.5 H1458.6 M1434,900.1 H1458.6 V791.3 H1610.3 V831.5 M1466.8,900.1 V799.5 H1603 V831.5" stroke="#4d4d4d" stroke-width="1.8" fill="none" /><path d="M1490.6,900.1 H1610.3 M1490.6,904.7 H1603 V1141 M1610.3,900.1 V1073.1 M1601.3,1073 V1141" stroke="#4d4d4d" stroke-width="1.8" fill="none" /><path d="M1606,831.5 V900" stroke="#7a7a7a" stroke-width="2.5" fill="none" /><rect x="1508.8" y="800.5" width="33.9" height="81.3" fill="none" stroke="#b0b0b0" stroke-width="1.4"/><circle cx="1523.5" cy="846.2" r="9" fill="none" stroke="#7a7a7a" stroke-width="1.4"/><path d="M1542.7,808.7 H1603 M1542.7,833.4 H1603 M1542.7,840.7 H1603" stroke="#b0b0b0" stroke-width="1.5" fill="none" /><path d="M1480,810 Q1477,820 1482,826 H1500 V804 H1495 Z" stroke="#b0b0b0" stroke-width="1.4" fill="none" /><rect x="1441.2" y="851.7" width="17.4" height="20.1" fill="none" stroke="#b0b0b0" stroke-width="1.3"/><rect x="1559.1" y="904.7" width="20.1" height="19.2" fill="none" stroke="#b0b0b0" stroke-width="1.3"/><path d="M1501.9,945.8 V1204 H1526.1 V1225.9 H1550.4 M1510.4,945.8 V1199.2 H1532.2 V1224.7" stroke="#4d4d4d" stroke-width="1.8" fill="none" /><path d="M1555.2,1219.8 V1239.2 H1601.3 V1141 M1550.4,1222 V1245.3 H1608.6 V1141" stroke="#4d4d4d" stroke-width="1.8" fill="none" /><path d="M1510.4,945.8 H1535.8 V1131.3 H1510.4" stroke="#4d4d4d" stroke-width="1.8" fill="none" /><path d="M1510.4,982.1 H1535.8" stroke="#4d4d4d" stroke-width="2" fill="none" /><path d="M1510.4,1019.7 H1535.8" stroke="#4d4d4d" stroke-width="2" fill="none" /><path d="M1510.4,1057.3 H1535.8" stroke="#4d4d4d" stroke-width="2" fill="none" /><path d="M1510.4,1093.7 H1535.8" stroke="#4d4d4d" stroke-width="2" fill="none" /><path d="M1605,1073 V1141" stroke="#7a7a7a" stroke-width="2.8" fill="none" /><path d="M1501.9,1204 V1274" stroke="#b0b0b0" stroke-width="1.2" fill="none" /><path d="M1550.6,1271.8 H1608.3 V1427.4 H1367 M1554.1,1280.6 H1601.3 V1420.4 H1321.7 V1318.2 H1472 V1358.4 H1510.4 V1349" stroke="#4d4d4d" stroke-width="1.6" fill="none" /><path d="M1554.1,1285 Q1550,1330 1508.7,1349.6" stroke="#7a7a7a" stroke-width="1.6" fill="none" /><path d="M1444.9,1354.9 H1472 V1389.8 H1444.9 V1420 M1447.5,1318.2 V1354.9" stroke="#7a7a7a" stroke-width="1.6" fill="none" /><path d="M1253.5,1318 V1425 M1316.4,1318 V1425 M1258.7,1320 H1283.2 V1386.3 H1258.7" stroke="#b0b0b0" stroke-width="1.5" fill="none" /><circle cx="1270" cy="1352" r="9" fill="none" stroke="#b0b0b0" stroke-width="1.4"/><path d="M1157.3,1319.3 H1252.6 V1420.6 H1157.3 Z M1161,1344.4 H1200" stroke="#b0b0b0" stroke-width="1.6" fill="none" /><path d="M976.3,1356.5 H1071.6 V1420.6 H976.3 Z M1013.6,1436.2 H1074.2 M1014.4,1420.6 V1458.7" stroke="#b0b0b0" stroke-width="1.6" fill="none" /><path d="M1396.8,271 V1463" stroke="#e8231f" stroke-width="1.1" fill="none" /><path d="M834,790.8 H1679 M834,799.5 H1679 M834,823.9 H1679" stroke="#e8231f" stroke-width="1.1" fill="none" /></svg>
<div class="tc" style="position:absolute;left:1296.7px;top:847.9px;font-size:12px;line-height:13px;color:#6a6a6a;white-space:nowrap;">kitchen</div>
<div class="tc" style="position:absolute;left:1544.5px;top:867.1px;font-size:12px;line-height:13px;color:#6a6a6a;white-space:nowrap;">bathroom</div>
<div class="tc" style="position:absolute;left:976.3px;top:1071.1px;font-size:12px;line-height:13px;color:#6a6a6a;white-space:nowrap;">main room</div>
<div class="tc" style="position:absolute;left:1550.4px;top:1072.7px;font-size:12px;line-height:13px;color:#6a6a6a;white-space:nowrap;">study</div>
<div class="tc" style="position:absolute;left:1184.2px;top:1365.5px;font-size:12px;line-height:13px;color:#6a6a6a;white-space:nowrap;">storage</div>
<div class="tc" style="position:absolute;left:1356px;top:1367.5px;font-size:12px;line-height:13px;color:#6a6a6a;white-space:nowrap;">bedroom</div>
<div class="tc" style="position:absolute;left:1516px;top:1371.1px;font-size:12px;line-height:13px;color:#6a6a6a;white-space:nowrap;">bedroom</div>
<svg style="left:0;top:0" width="2556" height="1528" viewBox="0 0 2556 1528"><path d="M28,235 L18,258 M286,235 L275,258" stroke="#4d5564" stroke-width="1.4"/><path d="M89.4,265 L104,229.2 H227.6 L213.4,265 Z" fill="#3b4453"/><path d="M197,241.5 L209,253 M209,241.5 L197,253" stroke="#a3a7ae" stroke-width="2.4"/><path d="M250,238 V256 M241,247 H259" stroke="#e6e6e6" stroke-width="2.6"/><path d="M28.5,1486.6 L18,1509.6 M116.7,1486.6 L106,1509.6 M336.6,1486.6 L326,1509.6" stroke="#4d5564" stroke-width="1.4"/><path d="M160.2,1515.6 L175.2,1480 H279 L264,1515.6 Z" fill="#3b4453"/><path d="M301,1489.5 V1507.5 M292,1498.5 H310.5" stroke="#e6e6e6" stroke-width="2.6"/><path d="M66.5,1320 V1449.2 H141.9 Z" stroke="#1f4cff" stroke-width="1.4" fill="none" stroke-linejoin="miter"/><path d="M66.5,1437 H78.5 V1449.2" stroke="#1f4cff" stroke-width="1.3" fill="none"/><path d="M68.4,1356 L77.3,1365 L87.5,1356 M77.3,1365 V1374.7 M110,1429 L128.8,1447.5 M110,1447.5 L129.5,1429" stroke="#1f4cff" stroke-width="1.3" fill="none"/><path d="M1891,1026.5 H1951.5 M1960,1026.5 H2020 M1955.5,962 V1022 M1955.5,1031 V1091" stroke="#000" stroke-width="1.3"/><rect x="1951.3" y="1022.2" width="8.6" height="8.6" fill="none" stroke="#000" stroke-width="1.3"/><rect x="2462" y="291" width="17.5" height="7.5" fill="#ececec" stroke="#333" stroke-width="1.4"/><rect x="2497" y="282.5" width="12.5" height="12.5" fill="#ececec" stroke="#333" stroke-width="1.4"/><rect x="2492.5" y="287" width="12.5" height="12.5" fill="#ececec" stroke="#333" stroke-width="1.4"/><rect x="2496" y="290.5" width="5.5" height="5.5" fill="#555"/><path d="M2523,285 L2537.5,298 M2537.5,285 L2523,298" stroke="#333" stroke-width="4.2"/><path d="M2523,285 L2537.5,298 M2537.5,285 L2523,298" stroke="#f0f0f0" stroke-width="2.4"/><rect x="2501.5" y="307.5" width="46.5" height="192" rx="5" fill="#a3a3a3" stroke="#7e7e7e" stroke-width="1.2"/><circle cx="2539" cy="315.8" r="4.5" fill="none" stroke="#8f8f8f" stroke-width="1.2"/><path d="M2537,313.8 L2541,317.8 M2541,313.8 L2537,317.8" stroke="#8f8f8f" stroke-width="1"/><path d="M2505,323.5 H2546 M2507,375.5 H2545" stroke="#999" stroke-width="1"/><path d="M2521,361 A13,13 0 1 1 2535.5,352" stroke="#8f8f8f" stroke-width="1.6" fill="none"/><circle cx="2520" cy="348.5" r="5.5" stroke="#8f8f8f" stroke-width="1.6" fill="none"/><text x="2526.5" y="367" font-family="Liberation Sans" font-size="11" fill="#8aa0b8">2D</text><path d="M2512,401 C2515,398 2519,401 2521,404 V386 C2521,383 2525,383 2525,386 V396 V383 C2525,380 2529,380 2529,383 V396 V384 C2529,381 2533,381 2533,384 V397 V388 C2533,385 2537,385 2537,388 V402 C2537,410 2532,415 2526,415 C2520,415 2517,410 2512,401 Z" stroke="#8f8f8f" stroke-width="1.4" fill="none"/><path d="M2510,426 L2532,447 M2532,426 L2510,447" stroke="#8f8f8f" stroke-width="1.2"/><circle cx="2532" cy="445" r="7" fill="#a3a3a3" stroke="#8f8f8f" stroke-width="1.6"/><path d="M2537,450 L2542,455" stroke="#8f8f8f" stroke-width="2.4"/><path d="M2523,469 H2529 L2526,472 Z" fill="#8f8f8f"/><circle cx="2539" cy="490.9" r="4.5" fill="none" stroke="#8f8f8f" stroke-width="1.2"/><path d="M2536,489.5 H2542 M2536,492 H2542" stroke="#8f8f8f" stroke-width="1"/></svg>
<div class="t" style="left:42.4px;top:238.9px;font-size:18px;line-height:18px;color:#e6e6e6;letter-spacing:-0.154px;">Start</div>
<div class="t" style="left:114.4px;top:238.4px;font-size:18px;line-height:18px;color:#ffffff;font-weight:bold;letter-spacing:-0.003px;">uhouse*</div>
<div class="t" style="left:42.3px;top:1490.8px;font-size:18px;line-height:18px;color:#e6e6e6;letter-spacing:0.867px;">Model</div>
<div class="t" style="left:130.5px;top:1490.8px;font-size:18px;line-height:18px;color:#e6e6e6;letter-spacing:-0.731px;">a3</div>
<div class="t" style="left:185.6px;top:1490.4px;font-size:18px;line-height:18px;color:#ffffff;font-weight:bold;letter-spacing:-0.136px;">Layout1</div>
<div style="white-space:nowrap;left:23px;top:871px;font-size:17.5px;line-height:17.5px;color:#eeeeee;transform:translate(-50%,-50%) rotate(-90deg);letter-spacing:0px;">Layer Properties Manager</div>
<div style="left:565px;top:1286px;width:37px;height:188px;background:#474c57;border-top-left-radius:4px;border-bottom-left-radius:4px;"></div>
<div style="left:602px;top:1286px;width:1424px;height:156px;background:rgba(203,203,203,0.69);box-sizing:border-box;border-top:1.5px solid #3e4451;border-right:1.5px solid #3e4451;border-top-right-radius:3px;"></div>
<div style="left:602px;top:1442px;width:1424px;height:32px;background:rgba(252,252,252,0.73);box-sizing:border-box;border-top:1.8px solid #3e4451;border-right:1.5px solid #3e4451;border-bottom:1px solid #3e4451;"></div>
<svg style="left:0;top:0" width="2556" height="1528" viewBox="0 0 2556 1528"><path d="M571.5,1294.6 H598" stroke="#e0e0e0" stroke-width="1.4" stroke-dasharray="1.5,2.5"/><path d="M577,1315 L589,1327.3 M589,1315 L577,1327.3" stroke="#dcdcdc" stroke-width="2.2"/><path d="M573,1366.5 L585,1354.5" stroke="#c8c8c8" stroke-width="3.2" stroke-linecap="round"/><path d="M583,1356.5 A6,6 0 0 1 590.5,1346 L587.5,1351 L590,1353.5 L595,1350.5 A6,6 0 0 1 585,1358.5 Z" fill="#c8c8c8"/><rect x="609.5" y="1451.5" width="23" height="17" fill="none" stroke="#6e6e6e" stroke-width="1.3"/><rect x="609.5" y="1451.5" width="23" height="4" fill="#6e6e6e"/><path d="M612,1459 L616,1461.5 L612,1464 M617,1465.5 H622" stroke="#6e6e6e" stroke-width="1" fill="none"/><path d="M636,1456.8 H647.5 L641.8,1463.3 Z" fill="#6e6e6e"/><path d="M2009.2,1462.2 H2020.6 L2014.9,1456.6 Z" fill="#7a7a7a"/></svg>
<div class="t" style="left:606.5px;top:1304.2px;font-size:18.3px;line-height:18.3px;color:#2a2a2a;font-family:'Liberation Mono',monospace;letter-spacing:0.02px;">Specify viewport(s) [All/Select/Current/eXcept current] &lt;Current&gt;: _CURRENT</div>
<div class="t" style="left:606.5px;top:1327.2px;font-size:18.3px;line-height:18.3px;color:#2a2a2a;font-family:'Liberation Mono',monospace;letter-spacing:0.02px;">Enter an option [?/Color/Ltype/LWeight/TRansparency/Freeze/Thaw/Reset/reMoveoverrides/Newfrz/Vpvisdflt]:</div>
<div class="t" style="left:606.5px;top:1350.1px;font-size:18.3px;line-height:18.3px;color:#2a2a2a;font-family:'Liberation Mono',monospace;letter-spacing:0.02px;">Command: Z</div>
<div class="t" style="left:606.5px;top:1373.1px;font-size:18.3px;line-height:18.3px;color:#2a2a2a;font-family:'Liberation Mono',monospace;letter-spacing:0.02px;">ZOOM</div>
<div class="t" style="left:606.5px;top:1396.0px;font-size:18.3px;line-height:18.3px;color:#2a2a2a;font-family:'Liberation Mono',monospace;letter-spacing:0.02px;">Specify corner of window, enter a scale factor (nX or nXP), or</div>
<div class="t" style="left:606.5px;top:1419.0px;font-size:18.3px;line-height:18.3px;color:#2a2a2a;font-family:'Liberation Mono',monospace;letter-spacing:0.02px;">[All/Center/Dynamic/Extents/Previous/Scale/Window/Object] &lt;real time&gt;: e</div>
<div class="t" style="left:659px;top:1449.8px;font-size:18.3px;line-height:18.3px;color:#7a7a7a;font-family:'Liberation Mono',monospace;font-style:italic;">Type a command</div>
<svg style="left:0;top:0" width="2556" height="1528" viewBox="0 0 2556 1528"><rect x="1765" y="1484" width="63.200000000000045" height="35.6" fill="#3b4453"/><rect x="1833.8" y="1484" width="36.0" height="35.6" fill="#3b4453"/><rect x="1872" y="1484" width="155.70000000000005" height="35.6" fill="#3b4453"/><rect x="2100.9" y="1484" width="25.199999999999818" height="35.6" fill="#3b4453"/><rect x="2131.9" y="1484" width="108.0" height="35.6" fill="#3b4453"/><rect x="2246" y="1484" width="59.90000000000009" height="35.6" fill="#3b4453"/><rect x="2308.1" y="1484" width="35.90000000000009" height="35.6" fill="#3b4453"/><rect x="2350.1" y="1484" width="34.70000000000027" height="35.6" fill="#3b4453"/><rect x="2390.9" y="1484" width="83.90000000000009" height="35.6" fill="#3b4453"/><rect x="2479.1" y="1484" width="72.0" height="35.6" fill="#3b4453"/><rect x="2030.8" y="1484.5" width="34.100000000000136" height="35" fill="#5b8dc2"/><rect x="2066.9" y="1484.5" width="34.0" height="35" fill="#5b8dc2"/><path d="M1845.3,1493.3 V1503.3 M1840,1498.3 H1850.7" stroke="#e0e0e0" stroke-width="1.5"/><rect x="1849.1" y="1505.2" width="14.9" height="5.7" fill="#e0e0e0"/><rect x="1850.3" y="1506.3" width="2" height="3.5" fill="#3b4453"/><path d="M1878.8,1490.2 V1513 H1902 M1878.8,1506 H1886 V1513" stroke="#e0e0e0" stroke-width="1.3" fill="none"/><circle cx="1923.3" cy="1502.2" r="9" stroke="#e0e0e0" stroke-width="1.3" fill="none"/><path d="M1923,1502.2 H1938 M1923,1502.2 L1934,1491.5" stroke="#e0e0e0" stroke-width="1.3"/><path d="M1950.1,1499.4 H1961.6 L1955.85,1505.2 Z M2010.3,1499.4 H2022 L2016.15,1505.2 Z M2107.8,1499.1 H2120 L2113.9,1505.2 Z" fill="#dcdcdc"/><path d="M1977,1492 L1995,1510" stroke="#e05050" stroke-width="1.2"/><path d="M1986.4,1490 V1512" stroke="#50d070" stroke-width="1.2"/><rect x="1983.5" y="1499" width="6" height="6" fill="#3b4453" stroke="#f0f0f0" stroke-width="1"/><path d="M2036.3,1510.4 L2053.7,1493 M2036.3,1510.4 H2060" stroke="#f5f5f5" stroke-width="1.4"/><rect x="2042.5" y="1499.5" width="5.5" height="5.5" fill="#f5f5f5"/><rect x="2075.5" y="1493.5" width="20" height="19.5" fill="none" stroke="#f5f5f5" stroke-width="1.4"/><rect x="2072.1" y="1490.5" width="6.2" height="6" fill="#5b8dc2" stroke="#f5f5f5" stroke-width="1.3"/><rect x="2138.5" y="1490.5" width="23" height="23" fill="none" stroke="#e0e0e0" stroke-width="1.2" stroke-dasharray="3,2.5"/><rect x="2145.5" y="1500" width="10.5" height="10.5" fill="none" stroke="#e0e0e0" stroke-width="1.3"/><path d="M2140,1492 L2147,1499" stroke="#e0e0e0" stroke-width="1.2"/><path d="M2185.5,1491 L2194.5,1514 L2185.5,1508 L2174.5,1514 Z" fill="#dcdcdc"/><path d="M2221,1491 L2230,1514 L2221,1508 L2210,1514 Z" fill="#dcdcdc"/><circle cx="2194.5" cy="1495.8" r="3.6" fill="none" stroke="#e0e0e0" stroke-width="1.2"/><path d="M2231,1491 L2227,1497 H2230 L2227,1502 L2233,1495.5 H2230 Z" fill="#dcdcdc"/><polygon points="2275.67,1499.66 2272.73,1503.76 2273.88,1508.67 2268.90,1509.48 2266.24,1513.77 2262.14,1510.83 2257.23,1511.98 2256.42,1507.00 2252.13,1504.34 2255.07,1500.24 2253.92,1495.33 2258.90,1494.52 2261.56,1490.23 2265.66,1493.17 2270.57,1492.02 2271.38,1497.00" fill="#dcdcdc"/><circle cx="2263.9" cy="1502" r="4" fill="#3b4453"/><path d="M2288.2,1498.8 H2299.5 L2293.85,1504.9 Z" fill="#dcdcdc"/><path d="M2325.5,1489.8 V1512.7 M2313.9,1501.2 H2337.1" stroke="#dcdcdc" stroke-width="2.4"/><rect x="2356" y="1490.5" width="10" height="9.2" fill="none" stroke="#e0e0e0" stroke-width="1.1"/><circle cx="2374.6" cy="1500.6" r="5.3" fill="none" stroke="#e0e0e0" stroke-width="1.1"/><path d="M2365.4,1505 L2371.1,1514 H2359.7 Z" fill="none" stroke="#e0e0e0" stroke-width="1.1"/><path d="M2395,1484.5 H2418 L2424.5,1491 V1507 H2395 Z" fill="#3a73b8"/><path d="M2395,1504 H2412 L2417,1509 L2412,1515 H2395 Z" fill="#f2b705"/><path d="M2406,1484.5 V1504 M2395,1493.5 H2420" stroke="#cfe3f5" stroke-width="1.2"/><circle cx="2406" cy="1493.5" r="2.2" fill="none" stroke="#cfe3f5" stroke-width="1.2"/><path d="M2412,1510 L2418,1516 L2430,1503" stroke="#46b34a" stroke-width="3.4" fill="none"/><path d="M2441,1498 H2450 L2452.5,1500.5 V1514.5 H2441 Z" fill="#f0f0f0" stroke="#3a73b8" stroke-width="0.8"/><path d="M2441.5,1508 L2452,1506 V1514 H2441.5 Z" fill="#f2b705"/><path d="M2448,1492 A9,9 0 1 1 2463,1505" stroke="#e0e0e0" stroke-width="1.3" fill="none"/><path d="M2445,1491 L2450,1489 L2449,1495 Z" fill="#e0e0e0"/><circle cx="2458.5" cy="1509" r="5.7" fill="#5aa9e6"/><path d="M2458.5,1507 V1512.5" stroke="#fff" stroke-width="1.4"/><circle cx="2458.5" cy="1505" r="0.8" fill="#fff"/><rect x="2485.5" y="1493" width="23.5" height="16.5" fill="none" stroke="#e0e0e0" stroke-width="1.2"/><path d="M2494,1503 L2489,1507 M2500,1499 L2505,1495" stroke="#e0e0e0" stroke-width="1.2"/><path d="M2488.5,1508 V1503.5 M2488.5,1508 H2493 M2505.5,1494.5 V1499 M2505.5,1494.5 H2501" stroke="#e0e0e0" stroke-width="1.2" fill="none"/><rect x="2521" y="1491" width="24" height="3" fill="#e6e6e6"/><rect x="2521" y="1500" width="24" height="3" fill="#e6e6e6"/><rect x="2521" y="1508.5" width="24" height="3" fill="#e6e6e6"/></svg>
<div class="t" style="left:1771px;top:1494.8px;font-size:17px;line-height:17px;color:#f0f0f0;letter-spacing:-0.844px;">PAPER</div>
</body></html>
